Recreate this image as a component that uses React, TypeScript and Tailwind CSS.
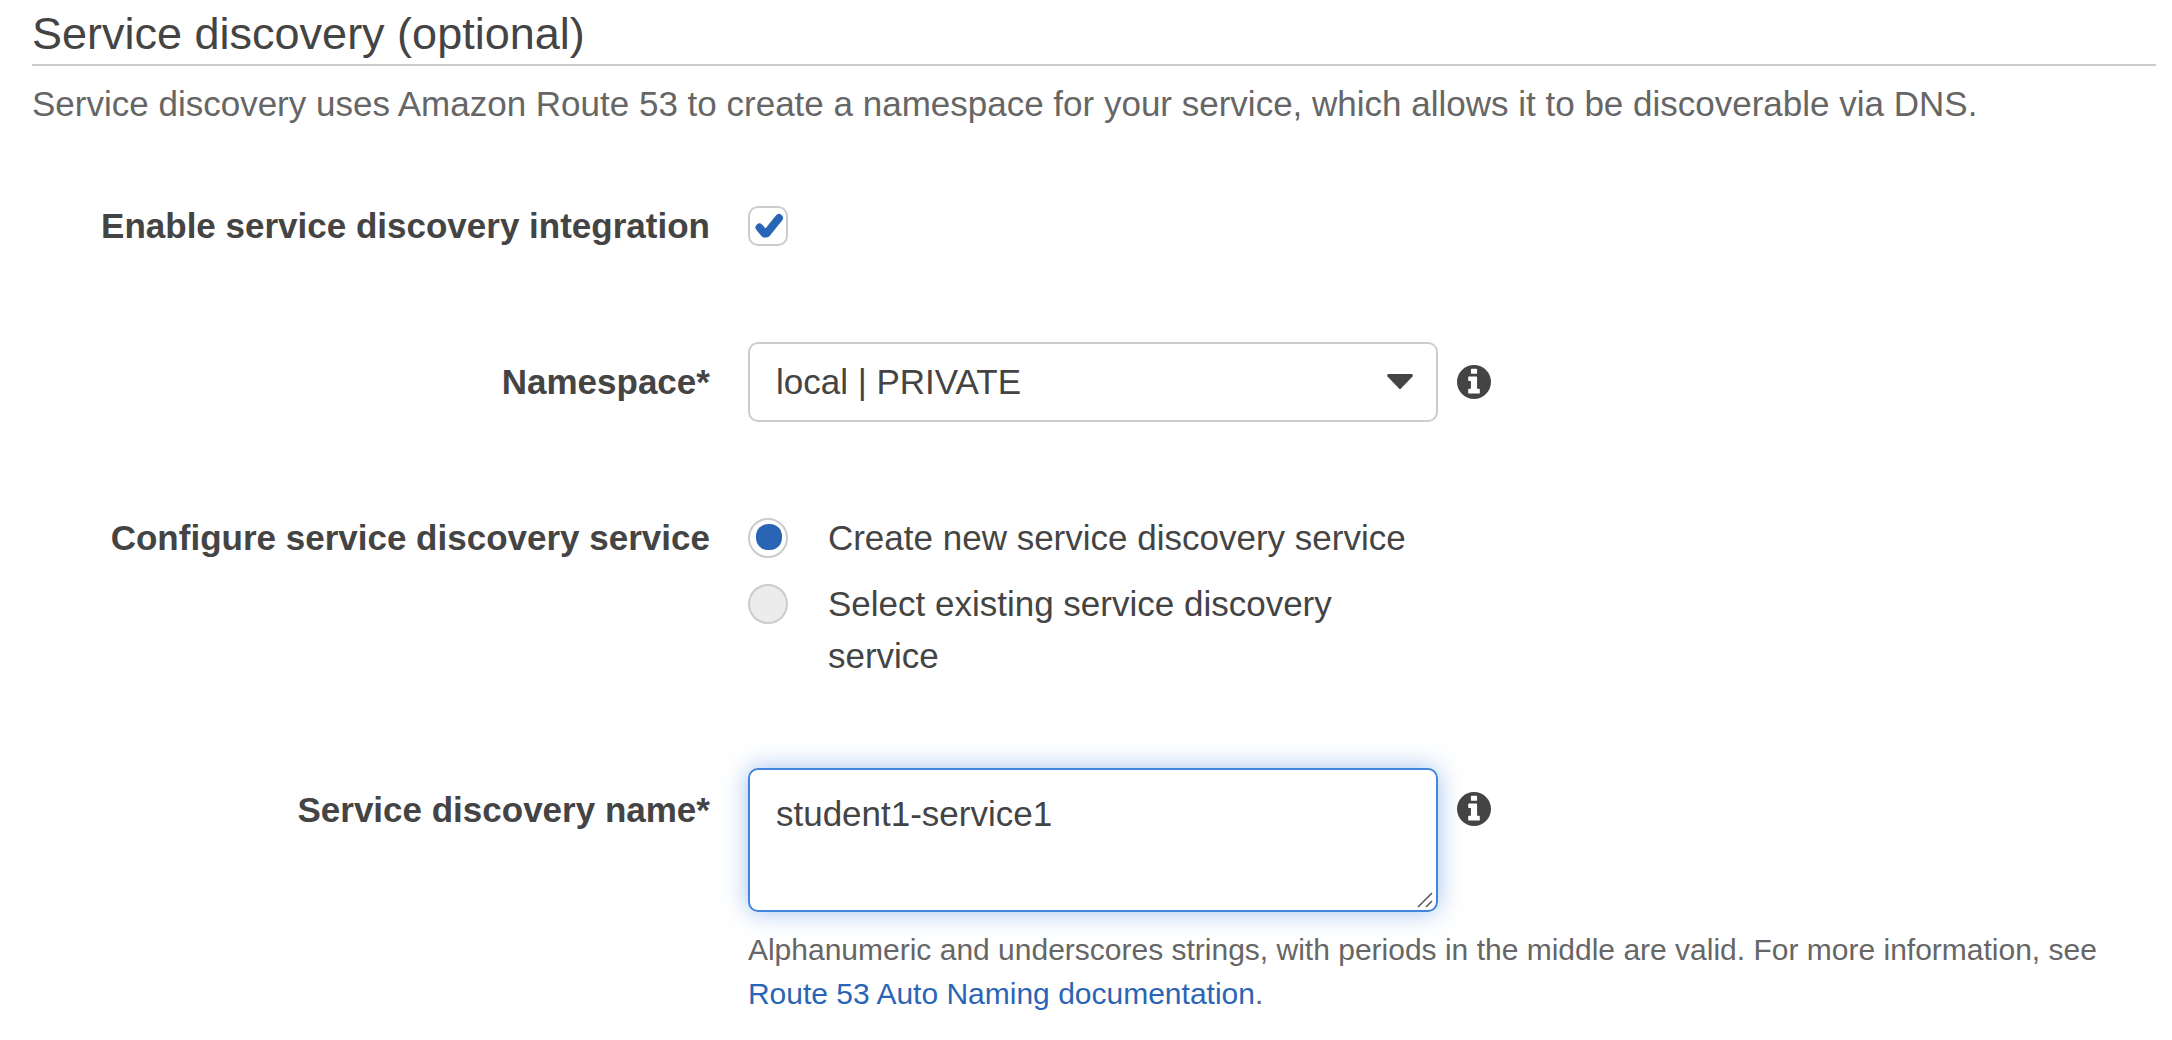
import { useState, type ReactNode } from "react";

function InfoButton({ label }: { label: string }) {
  return (
    <button type="button" aria-label={label} className="shrink-0 rounded-full">
      <svg viewBox="0 0 100 100" className="block size-[34px]" aria-hidden="true">
        <circle cx="50" cy="50" r="50" fill="#444444" />
        <path
          fill="#ffffff"
          d="M43 11h14q2 0 2 2v11q0 2-2 2H43q-2 0-2-2V13q0-2 2-2zM35 34h22q2 0 2 2v34h6q2 0 2 2v10q0 2-2 2H35q-2 0-2-2V72q0-2 2-2h6V47h-6q-2 0-2-2V36q0-2 2-2z"
        />
      </svg>
    </button>
  );
}

function Row({ label, children }: { label: ReactNode; children: ReactNode }) {
  return (
    <div className="grid grid-cols-[13fr_27fr] gap-[38px]">
      <div className="text-right font-bold">{label}</div>
      <div className="min-w-0">{children}</div>
    </div>
  );
}

function RadioOption({
  text,
  checked,
  onSelect,
}: {
  text: string;
  checked: boolean;
  onSelect: () => void;
}) {
  return (
    <label className="flex items-start gap-10">
      <span className="relative my-[6px] block size-10 shrink-0">
        <input
          type="radio"
          name="discovery-service"
          checked={checked}
          onChange={onSelect}
          className="block size-10 appearance-none rounded-full border-2 border-[#cccccc] bg-[#ececec] checked:bg-white"
        />
        {checked && (
          <span className="pointer-events-none absolute top-[6px] left-2 size-[26px] rounded-[12px] bg-[#2a65b5]" />
        )}
      </span>
      <span>{text}</span>
    </label>
  );
}

export default function App() {
  const [enabled, setEnabled] = useState(true);
  const [mode, setMode] = useState("create");
  const [name, setName] = useState("student1-service1");

  return (
    <main className="bg-white pr-4 pl-8 font-['Liberation_Sans',Arial,sans-serif] text-[35px] leading-[52px] text-[#444444]">
      <h2 className="border-b-2 border-[#cccccc] pt-1 text-[45px] leading-[60px]">
        Service discovery (optional)
      </h2>
      <p className="mt-3 text-[#666666]">
        Service discovery uses Amazon Route 53 to create a namespace for your service, which allows
        it to be discoverable via DNS.
      </p>

      <form className="mt-[70px] flex flex-col gap-[86px]">
        <div className="flex flex-col gap-[90px]">
          <Row label={<label htmlFor="enable">Enable service discovery integration</label>}>
            <div className="relative my-[6px] size-10">
              <input
                id="enable"
                type="checkbox"
                checked={enabled}
                onChange={(e) => setEnabled(e.target.checked)}
                className="block size-10 appearance-none rounded-[10px] border-2 border-[#cccccc] bg-white"
              />
              {enabled && (
                <svg
                  viewBox="0 0 40 40"
                  className="pointer-events-none absolute inset-0 size-10"
                  aria-hidden="true"
                >
                  <path
                    d="M11.5 21.5L16.5 27.5L18.5 27.5L31 12"
                    fill="none"
                    stroke="#2a65b5"
                    strokeWidth="8"
                    strokeLinecap="round"
                    strokeLinejoin="round"
                  />
                </svg>
              )}
            </div>
          </Row>

          <Row
            label={
              <label htmlFor="namespace" className="block py-[14px]">
                Namespace*
              </label>
            }
          >
            <div className="flex items-center gap-[19px]">
              <div className="relative w-full max-w-[690px]">
                <select
                  id="namespace"
                  className="block h-20 w-full appearance-none rounded-[10px] border-2 border-[#cccccc] bg-white px-[26px]"
                >
                  <option>local | PRIVATE</option>
                </select>
                <svg
                  viewBox="0 0 26 16"
                  className="pointer-events-none absolute top-8 right-[25px] h-4 w-[26px]"
                  aria-hidden="true"
                >
                  <path
                    d="M1.5 0h23q2 0.5 1 2.5L14 14.5q-1 1-2 0L0.5 2.5Q-0.5 0.5 1.5 0z"
                    fill="#444444"
                  />
                </svg>
              </div>
              <InfoButton label="About namespace" />
            </div>
          </Row>

          <Row label={<span id="configure">Configure service discovery service</span>}>
            <div
              role="radiogroup"
              aria-labelledby="configure"
              className="flex max-w-[690px] flex-col gap-[14px]"
            >
              <RadioOption
                text="Create new service discovery service"
                checked={mode === "create"}
                onSelect={() => setMode("create")}
              />
              <RadioOption
                text="Select existing service discovery service"
                checked={mode === "existing"}
                onSelect={() => setMode("existing")}
              />
            </div>
          </Row>
        </div>

        <Row
          label={
            <label htmlFor="service-name" className="block pt-4">
              Service discovery name*
            </label>
          }
        >
          <div className="flex items-start gap-[19px]">
            <div className="relative w-full max-w-[690px]">
              <textarea
                id="service-name"
                value={name}
                onChange={(e) => setName(e.target.value)}
                className="block h-36 w-full resize-none rounded-[10px] border-2 border-[#4385dc] bg-white px-[26px] py-[18px] shadow-[0_0_24px_rgba(67,133,220,0.5)] outline-none"
              />
              <svg
                viewBox="0 0 16 16"
                className="pointer-events-none absolute right-[5px] bottom-1 size-4"
                aria-hidden="true"
              >
                <path d="M1 15L15 1M9 15L15 9" stroke="#555555" strokeWidth="1.5" fill="none" />
              </svg>
            </div>
            <div className="flex pt-6">
              <InfoButton label="About service discovery name" />
            </div>
          </div>
          <p className="mt-4 text-[30px] leading-[44px] text-[#666666]">
            Alphanumeric and underscores strings, with periods in the middle are valid. For more
            information, see{" "}
            <a href="#documentation" className="text-[#2a65b5]">
              Route 53 Auto Naming documentation
            </a>
            .
          </p>
        </Row>
      </form>
    </main>
  );
}
